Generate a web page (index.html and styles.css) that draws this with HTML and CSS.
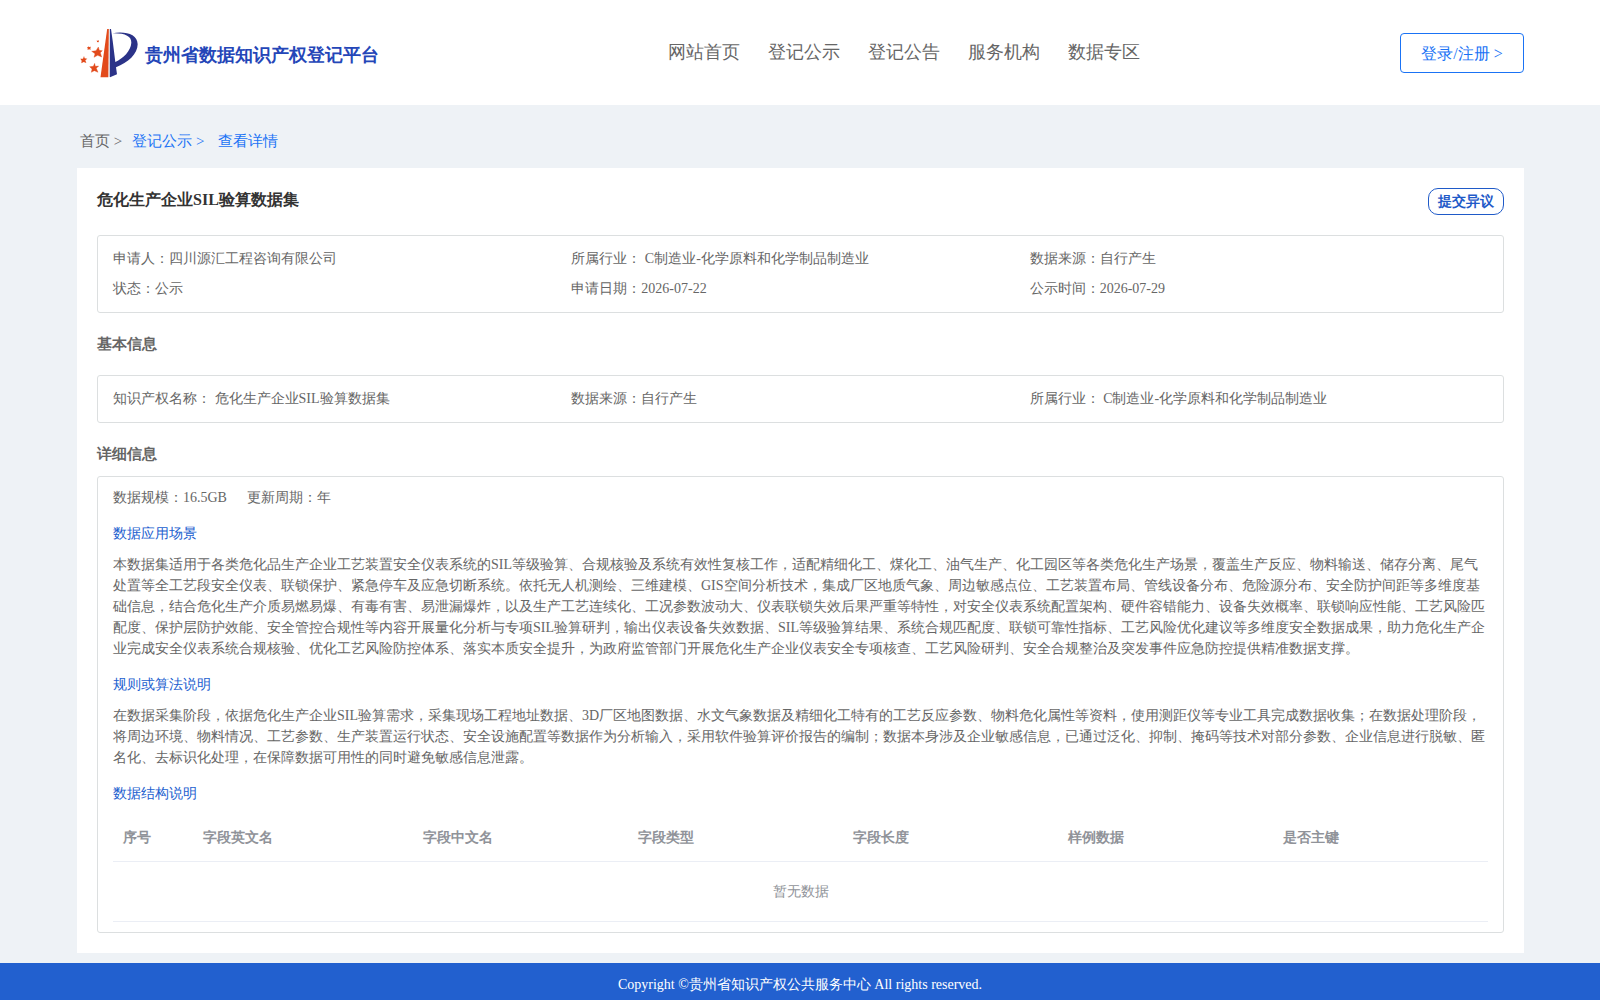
FILE: index.html
```html
<!DOCTYPE html>
<html lang="en">
<head>
<meta charset="utf-8">
<meta name="viewport" content="width=device-width, initial-scale=1">
<title>贵州省数据知识产权登记平台</title>
<link rel="stylesheet" href="styles.css">
</head>
<body>
<header class="site-header">
  <a class="brand" href="#">
    <svg class="brand-mark" viewBox="30 24 180 150" aria-hidden="true">
      <path fill="#e24a1b" d="M111.500 27H116.500L115 171.500H91.500Z"/>
      <path fill="#c9cad6" d="M118 27h2v144h-3z"/>
      <path fill="#2b3388" d="M120 27H123L128 62L136 126C160 114 182 94 184 68C185 49 165 39 127 40C165 33 203 42 203 73C203 102 174 128 138 142L141 163L120 172Z"/>
      <g fill="#e24a1b">
        <path d="M85 81l3 10 9 1-6 6 4 13-12-5-11 6 3-11-10-7 13-2z" stroke="#e24a1b" stroke-width="1"/>
        <path d="M74 130l2 9 10-1-7 7 5 12-11-5-9 5 2-10-7-7 11-1z" stroke="#e24a1b" stroke-width="1"/>
        <path d="M42 108l2 7 8 1-6 5 3 8-8-3-7 4 1-8-4-6 8 0z"/>
        <path d="M54 79l4 2 5-1-2 4 1 5-5-1-4 2 0-5-2-3 4-1z"/>
        <path d="M81 61l2 1 4-1-1 3 1 3-3-1-3 1 0-3-2-2 3 0z"/>
      </g>
    </svg>
    <span class="brand-name">贵州省数据知识产权登记平台</span>
  </a>
  <nav class="main-nav">
    <a href="#">网站首页</a>
    <a href="#">登记公示</a>
    <a href="#">登记公告</a>
    <a href="#">服务机构</a>
    <a href="#">数据专区</a>
  </nav>
  <button class="login" type="button">登录/注册 &gt;</button>
</header>

<main class="page">
  <nav class="crumbs">
    <a class="crumb-home" href="#">首页 &gt;</a>
    <a href="#">登记公示 &gt;&nbsp;</a>
    <a href="#">查看详情</a>
  </nav>

  <article class="card">
    <div class="card-head">
      <h1>危化生产企业SIL验算数据集</h1>
      <button class="objection" type="button">提交异议</button>
    </div>

    <div class="box facts">
      <span>申请人：四川源汇工程咨询有限公司</span>
      <span>所属行业： C制造业-化学原料和化学制品制造业</span>
      <span>数据来源：自行产生</span>
      <span>状态：公示</span>
      <span>申请日期：2026-07-22</span>
      <span>公示时间：2026-07-29</span>
    </div>

    <h2>基本信息</h2>
    <div class="box facts">
      <span>知识产权名称： 危化生产企业SIL验算数据集</span>
      <span>数据来源：自行产生</span>
      <span>所属行业： C制造业-化学原料和化学制品制造业</span>
    </div>

    <h2 class="tight">详细信息</h2>
    <div class="box details">
      <div class="scale">
        <span>数据规模：16.5GB</span>
        <span>更新周期：年</span>
      </div>
      <h3>数据应用场景</h3>
      <p>本数据集适用于各类危化品生产企业工艺装置安全仪表系统的SIL等级验算、合规核验及系统有效性复核工作，适配精细化工、煤化工、油气生产、化工园区等各类危化生产场景，覆盖生产反应、物料输送、储存分离、尾气处置等全工艺段安全仪表、联锁保护、紧急停车及应急切断系统。依托无人机测绘、三维建模、GIS空间分析技术，集成厂区地质气象、周边敏感点位、工艺装置布局、管线设备分布、危险源分布、安全防护间距等多维度基础信息，结合危化生产介质易燃易爆、有毒有害、易泄漏爆炸，以及生产工艺连续化、工况参数波动大、仪表联锁失效后果严重等特性，对安全仪表系统配置架构、硬件容错能力、设备失效概率、联锁响应性能、工艺风险匹配度、保护层防护效能、安全管控合规性等内容开展量化分析与专项SIL验算研判，输出仪表设备失效数据、SIL等级验算结果、系统合规匹配度、联锁可靠性指标、工艺风险优化建议等多维度安全数据成果，助力危化生产企业完成安全仪表系统合规核验、优化工艺风险防控体系、落实本质安全提升，为政府监管部门开展危化生产企业仪表安全专项核查、工艺风险研判、安全合规整治及突发事件应急防控提供精准数据支撑。</p>
      <h3>规则或算法说明</h3>
      <p>在数据采集阶段，依据危化生产企业SIL验算需求，采集现场工程地址数据、3D厂区地图数据、水文气象数据及精细化工特有的工艺反应参数、物料危化属性等资料，使用测距仪等专业工具完成数据收集；在数据处理阶段，将周边环境、物料情况、工艺参数、生产装置运行状态、安全设施配置等数据作为分析输入，采用软件验算评价报告的编制；数据本身涉及企业敏感信息，已通过泛化、抑制、掩码等技术对部分参数、企业信息进行脱敏、匿名化、去标识化处理，在保障数据可用性的同时避免敏感信息泄露。</p>
      <h3>数据结构说明</h3>
      <table class="fields">
        <thead>
          <tr>
            <th class="col-index" scope="col">序号</th>
            <th class="col-name" scope="col">字段英文名</th>
            <th scope="col">字段中文名</th>
            <th scope="col">字段类型</th>
            <th scope="col">字段长度</th>
            <th scope="col">样例数据</th>
            <th scope="col">是否主键</th>
          </tr>
        </thead>
        <tbody>
          <tr><td colspan="7">暂无数据</td></tr>
        </tbody>
      </table>
    </div>
  </article>
</main>

<footer class="site-footer">Copyright ©贵州省知识产权公共服务中心 All rights reserved.</footer>
</body>
</html>
```
FILE: styles.css
```css
* {
  box-sizing: border-box;
}

body {
  margin: 0;
  background: #eef2f6;
  color: #666;
  font-family: "Liberation Serif", serif;
  font-size: 14px;
  line-height: 21px;
}

a {
  color: inherit;
  text-decoration: none;
}

button {
  background: #fff;
  font-family: inherit;
  cursor: pointer;
}

h1,
h2,
h3,
p {
  margin: 0;
}

.site-header {
  display: flex;
  align-items: center;
  height: 105px;
  padding: 0 76px 0 80px;
  background: #fff;
}

.brand {
  display: flex;
  align-items: center;
  gap: 5px;
}

.brand-mark {
  width: 60px;
  height: 50px;
}

.brand-name {
  padding-top: 6px;
  color: #2446b8;
  font-size: 18px;
  font-weight: bold;
}

.main-nav {
  display: flex;
  margin: 0 auto;
  font-size: 18px;
}

.main-nav a {
  padding-left: 28px;
}

.login {
  width: 124px;
  height: 40px;
  padding: 3px 0 0;
  border: 1px solid #1a73f5;
  border-radius: 4px;
  color: #1a73f5;
  font-size: 16px;
}

.page {
  padding: 0 76px 10px 77px;
}

.crumbs {
  display: flex;
  gap: 10px;
  padding: 26px 3px 16px;
  color: #1a73f5;
  font-size: 15px;
}

.crumb-home {
  color: #666;
}

.card {
  padding: 20px;
  background: #fff;
}

.card-head {
  display: flex;
  align-items: flex-start;
  justify-content: space-between;
  padding-bottom: 20px;
}

h1 {
  color: #333;
  font-size: 16px;
  line-height: 24px;
}

.objection {
  width: 76px;
  height: 27px;
  padding: 0;
  border: 1px solid #1f5ac8;
  border-radius: 10px;
  color: #1f5ac8;
  font-size: 14px;
  font-weight: bold;
}

.box {
  border: 1px solid #dcdfe0;
  border-radius: 3px;
}

.facts {
  display: grid;
  grid-template-columns: repeat(3, 1fr);
  padding: 8px 15px;
  line-height: 30px;
}

h2 {
  padding: 21px 0;
  font-size: 15px;
  line-height: 20px;
}

.tight {
  padding-bottom: 12px;
}

.details {
  padding: 10px 15px;
}

.scale {
  display: flex;
  gap: 20px;
}

h3 {
  padding: 15px 0 10px;
  color: #2260cf;
  font-size: 14px;
  font-weight: normal;
}

.fields {
  width: 100%;
  table-layout: fixed;
  border-collapse: separate;
  border-spacing: 0;
  color: #909399;
}

.fields th,
.fields td {
  padding: 0 10px;
  border-bottom: 1px solid #ebeef5;
}

.fields th {
  height: 48px;
  text-align: left;
}

.fields td {
  height: 60px;
  text-align: center;
}

.fields .col-index {
  width: 80px;
}

.fields .col-name {
  width: 220px;
}

.site-footer {
  padding: 11px 20px 5px;
  background: #2260cf;
  color: #fff;
  text-align: center;
}
```
